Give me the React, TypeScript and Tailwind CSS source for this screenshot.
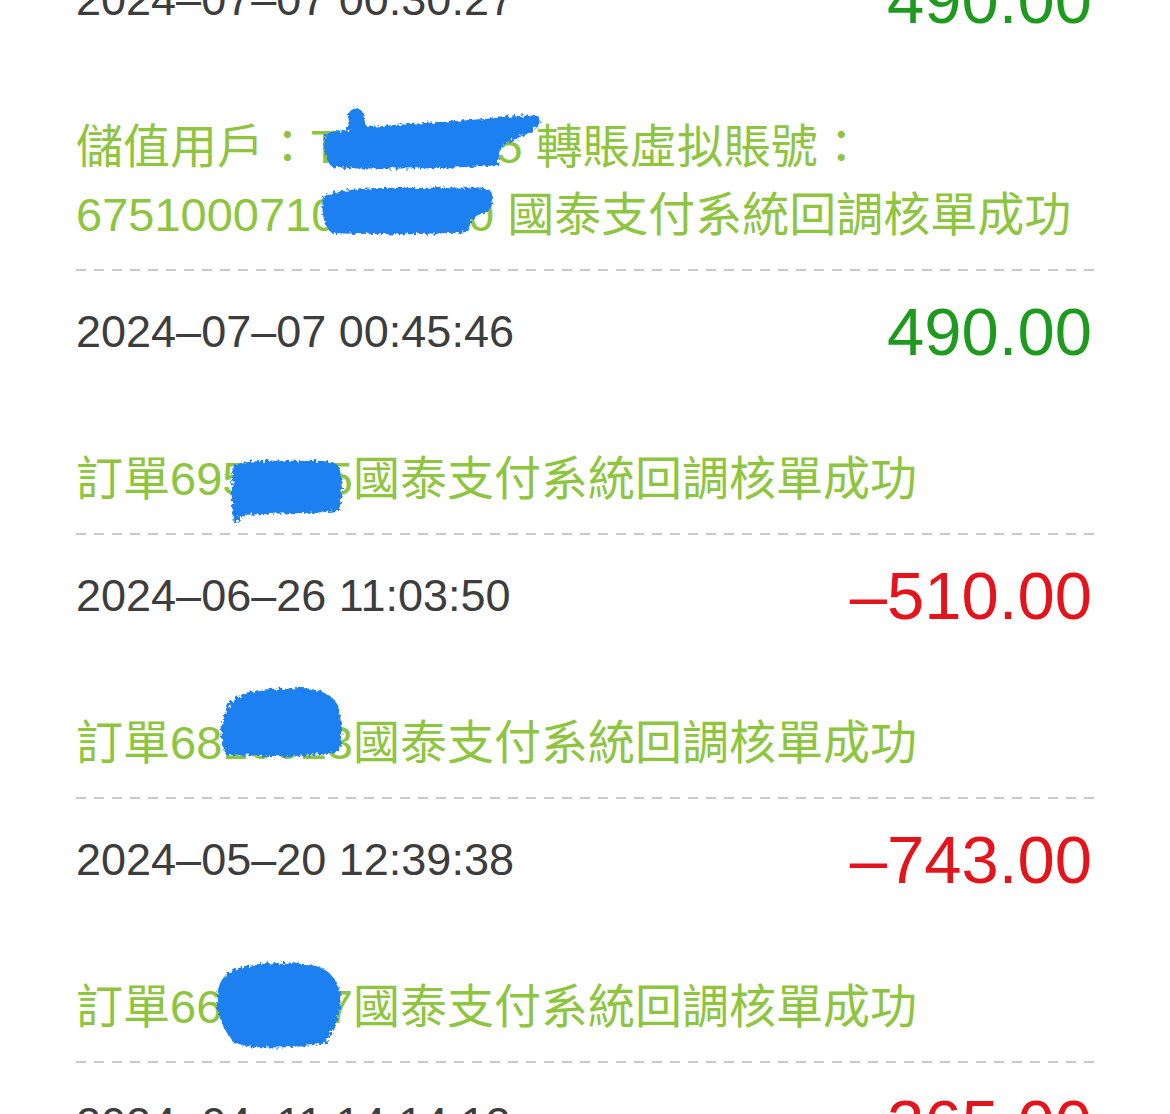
import React, { useId } from 'react';

// Transaction history list (scrolled, partially cut at top and bottom)

type Entry = {
  desc: string;
  date: string;
  amount: string;
  positive: boolean;
  blobs: string[];
};

const entries: Entry[] = [
  {
    desc: '儲值用戶：T0000005 轉賬虛拟賬號：6751000710000000 國泰支付系統回調核單成功',
    date: '2024–07–07 00:45:46',
    amount: '490.00',
    positive: true,
    blobs: [
      'M249,22 C258,18 266,17 272,17 L273,0 C276,-6 284,-6 287,0 L290,14 C330,11 380,8 420,5 C440,3 452,2 462,3 C466,8 462,15 455,19 C440,26 428,30 424,36 L422,52 C380,56 300,56 258,55 C250,50 247,40 249,22 Z',
      'M247,84 C262,76 300,74 340,75 C380,74 405,74 414,77 C419,84 418,94 410,99 C400,102 395,106 394,112 L392,119 C350,122 290,122 256,120 C248,114 245,100 247,84 Z',
    ],
  },
  {
    desc: '訂單6950005國泰支付系統回調核單成功',
    date: '2024–06–26 11:03:50',
    amount: '–510.00',
    positive: false,
    blobs: [
      'M158,20 C170,15 200,15 230,16 C250,15 260,17 263,22 C267,35 267,50 263,66 C230,69 200,68 168,70 C163,74 162,79 158,78 C155,65 155,40 158,20 Z',
    ],
  },
  {
    desc: '訂單6810023國泰支付系統回調核單成功',
    date: '2024–05–20 12:39:38',
    amount: '–743.00',
    positive: false,
    blobs: [
      'M150,2 C152,-14 180,-22 210,-20 C240,-24 262,-14 263,2 C266,14 266,30 264,42 C240,48 200,48 150,46 C144,32 144,14 150,2 Z',
    ],
  },
  {
    desc: '訂單6600007國泰支付系統回調核單成功',
    date: '2024–04–11 14:14:12',
    amount: '–365.00',
    positive: false,
    blobs: [
      'M150,2 C162,-12 230,-14 248,-4 C262,5 266,20 264,35 C262,50 255,58 250,70 C220,76 170,76 158,70 C150,60 145,50 141,35 C140,20 143,8 150,2 Z',
    ],
  },
];

function Scribble({ paths }: { paths: string[] }) {
  const id = useId().replace(/:/g, '');
  return (
    <svg
      className="pointer-events-none absolute left-0 top-0 overflow-visible"
      width="1018"
      height="136"
      viewBox="0 0 1018 136"
    >
      <defs>
        <filter id={`rough-${id}`} x="-20%" y="-50%" width="140%" height="200%">
          <feTurbulence type="fractalNoise" baseFrequency="0.3" numOctaves="2" seed="4" />
          <feDisplacementMap in="SourceGraphic" scale="7" />
        </filter>
      </defs>
      {paths.map((d, i) => (
        <path key={i} d={d} fill="#1d80f0" filter={`url(#rough-${id})`} />
      ))}
    </svg>
  );
}

function DateRow({ date, amount, positive }: { date: string; amount: string; positive: boolean }) {
  return (
    <div className="flex h-[80px] items-center justify-between">
      <span className="text-[45px] leading-none text-[#3d3d3d]">{date}</span>
      <span
        className={
          positive
            ? 'pr-[2px] text-[67px] leading-none text-[#1e9b1e]'
            : 'pr-[2px] text-[67px] leading-none text-[#e3141b]'
        }
      >
        {amount}
      </span>
    </div>
  );
}

export default function App() {
  return (
    <div
      className="h-[1114px] w-full overflow-hidden bg-white px-[76px]"
      style={{ fontFamily: '"Liberation Sans", "Noto Sans CJK TC", sans-serif' }}
    >
      <div className="-mt-[41px] flex flex-col">
        <DateRow date="2024–07–07 00:30:27" amount="490.00" positive />
        {entries.map((e, i) => (
          <div key={i} className="mt-[74px]">
            <div className="relative mb-[20px]">
              <p className="text-[47px] leading-[68px] text-[#8dc53e]">{e.desc}</p>
              <Scribble paths={e.blobs} />
            </div>
            <div className="h-[2px] w-full bg-[repeating-linear-gradient(90deg,#c9c9c9_0px,#c9c9c9_10px,transparent_10px,transparent_18px)]" />
            <div className="pt-[20px]">
              <DateRow date={e.date} amount={e.amount} positive={e.positive} />
            </div>
          </div>
        ))}
      </div>
    </div>
  );
}
